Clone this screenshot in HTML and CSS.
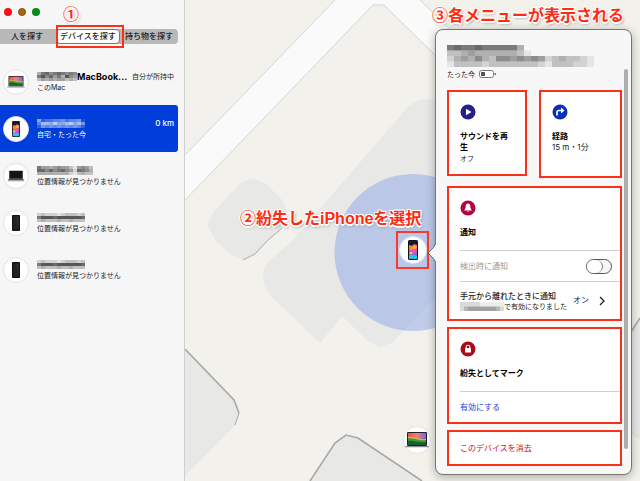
FILE: index.html
```html
<!DOCTYPE html>
<html lang="ja">
<head>
<meta charset="utf-8">
<meta name="viewport" content="width=device-width, initial-scale=1">
<title>探す</title>
<link rel="stylesheet" href="styles.css">
</head>
<body>
<svg class="defs" aria-hidden="true">
  <defs>
    <linearGradient id="screen" x1="0" y1="0" x2="0" y2="1">
      <stop offset="0" stop-color="#5b2346"/><stop offset=".25" stop-color="#f08a3c"/>
      <stop offset=".5" stop-color="#f04c9b"/><stop offset=".7" stop-color="#8a5ae0"/><stop offset="1" stop-color="#26c6e6"/>
    </linearGradient>
    <linearGradient id="sky" x1="0" y1="0" x2="1" y2="0">
      <stop offset="0" stop-color="#f0503c"/><stop offset=".5" stop-color="#f08478"/><stop offset="1" stop-color="#7a62dc"/>
    </linearGradient>
    <symbol id="phone" viewBox="0 0 10 20">
      <rect width="10" height="20" rx="1.5" fill="#15151c"/>
      <rect x="1" y="1" width="8" height="18" rx="1" fill="url(#screen)"/>
      <path d="M1 1h8v4L6 4 4 6 1 5z" fill="#1c1730"/>
      <circle cx="3.6" cy="8" r="2.2" fill="#ff8a2c"/><circle cx="6.8" cy="7.6" r="1.6" fill="#ffb25a"/>
      <circle cx="5.6" cy="12" r="2.4" fill="#ec4fc0"/><circle cx="2.8" cy="13" r="1.3" fill="#ffd24a"/>
      <path d="M1 16l3-1.5L9 16v2.5H1z" fill="#28c5e8"/>
    </symbol>
    <symbol id="phone-off" viewBox="0 0 10 20">
      <rect width="10" height="20" rx="1.2" fill="#101010"/><rect x="1.5" y="1.5" width="7" height="17" fill="#222"/>
      <path d="M5 2h3.5v16z" fill="#303030"/>
    </symbol>
    <symbol id="macbook" viewBox="0 0 24 16">
      <rect x="2" width="20" height="14" rx="1" fill="#20202a"/>
      <rect x="3" y="1" width="18" height="12" fill="url(#sky)"/>
      <path d="M3 5c5-1 10 3 18 2v6H3z" fill="#d8b93c"/>
      <path d="M3 6c6 0 10 3 18 2v5H3z" fill="#3f9a36"/>
      <path d="M3 9c5-1 8 2 18 1v3H3z" fill="#1d5f2c"/>
      <rect y="14" width="24" height="1.2" rx=".6" fill="#8b8d94"/>
    </symbol>
    <symbol id="macbook-off" viewBox="0 0 24 16">
      <rect x="3" y="1" width="18" height="12" rx="1" fill="#151515"/>
      <path d="M3 11h18l2 3H1z" fill="#555"/><path d="M1 14h22v1H1z" fill="#999"/>
    </symbol>
  </defs>
</svg>

<div class="app">
  <aside class="sidebar">
    <header class="titlebar">
      <span class="light light-close"></span><span class="light light-min"></span><span class="light light-zoom"></span>
    </header>
    <nav class="tabs">
      <button type="button">人を探す</button>
      <button type="button" class="active">デバイスを探す</button>
      <button type="button">持ち物を探す</button>
    </nav>
    <div class="note note-one">①</div>
    <ul class="devices">
      <li><button type="button" class="device">
        <span class="avatar"><svg class="mac"><use href="#macbook"/></svg></span>
        <span class="info">
          <span class="name"><svg class="mosaic" data-rows="4786787676,7968574965,3545455343"></svg>MacBook...</span>
          <span class="sub">このMac</span>
        </span>
        <span class="meta">自分が所持中</span>
      </button></li>
      <li><button type="button" class="device selected">
        <span class="avatar"><svg class="tel"><use href="#phone"/></svg></span>
        <span class="info">
          <span class="name"><svg class="mosaic" data-ink="light" data-rows="623344534451,477686678675,254545454542"></svg></span>
          <span class="sub">自宅・たった今</span>
        </span>
        <span class="meta">0 km</span>
      </button></li>
      <li><button type="button" class="device">
        <span class="avatar"><svg class="mac"><use href="#macbook-off"/></svg></span>
        <span class="info">
          <span class="name"><svg class="mosaic" data-rows="75545655315653,88686786528764,44444444213433"></svg></span>
          <span class="sub">位置情報が見つかりません</span>
        </span>
      </button></li>
      <li><button type="button" class="device">
        <span class="avatar"><svg class="tel"><use href="#phone-off"/></svg></span>
        <span class="info">
          <span class="name"><svg class="mosaic" data-rows="232221233323,799989999998,343334334333"></svg></span>
          <span class="sub">位置情報が見つかりません</span>
        </span>
      </button></li>
      <li><button type="button" class="device">
        <span class="avatar"><svg class="tel"><use href="#phone-off"/></svg></span>
        <span class="info">
          <span class="name"><svg class="mosaic" data-rows="232221233323,799989999998,343334334333"></svg></span>
          <span class="sub">位置情報が見つかりません</span>
        </span>
      </button></li>
    </ul>
  </aside>

  <main class="map">
    <svg class="terrain" viewBox="0 0 455 481" preserveAspectRatio="xMinYMin slice" aria-hidden="true">
      <rect width="455" height="481" fill="#f2f1eb"/>
      <path d="M0 155L150 0H235L440 200V245L250 55L199 5H188L0 200z" fill="#fafafa"/>
      <path d="M0 155L150 0M235 0L440 200M440 245L250 55L199 5H188L0 200" fill="none" stroke="#d6d6d2"/>
      <g fill="#e8e8e7">
        <path d="M68 178L80 183L97 200L103 213L97 228L83 240L70 254L58 260L45 254L30 240L22 224L30 210L57 182z"/>
        <path d="M108 240L223 107L232 101L240 99L250 100L320 150V240L250 298L207 343L194 347L182 340L157 316L135 343L85 295Q72 278 83 262z"/>
        <path d="M0 349L49 400L54 413L50 425L0 476z"/>
        <path d="M125 481L150 443L161 435L173 438L237 481z"/>
        <path d="M440 341L455 318V440L440 430z"/>
      </g>
      <path d="M97 228L83 240L70 254L58 260M50 425L54 413" fill="none" stroke="#aaa"/>
      <path d="M0 349L49 400L54 413M125 481L150 443L161 435L173 438L237 481M440 341L455 318" fill="none" stroke="#a8a8a5" stroke-width="1.6"/>
      <circle cx="228" cy="252.500" r="78.500" fill="#bac7e7"/>
      <path d="M207 343L250 298V328Q238 332 223 331z" fill="#fff" opacity=".1"/>
    </svg>

    <button type="button" class="pin pin-phone" aria-label="iPhone"><span class="avatar"><svg class="tel"><use href="#phone"/></svg></span></button>
    <button type="button" class="pin pin-mac" aria-label="MacBook"><span class="avatar"><svg class="mac"><use href="#macbook"/></svg></span></button>
    <div class="note note-two">②紛失したiPhoneを選択</div>
    <div class="note note-three">③各メニューが表示される</div>

    <section class="popover">
      <svg class="arrow" viewBox="0 0 9 20"><path d="M9 0Q8 4 1 10Q8 16 9 20" fill="#f8f8f8" stroke="#666"/></svg>
      <header class="summary">
        <svg class="mosaic large" data-rows="787787777740000000000,334544444431000000000,245464366565652343321,133332333333321333221"></svg>
        <div class="status">たった今
          <svg class="battery" viewBox="0 0 18 8"><rect x=".5" y=".5" width="14" height="7" rx="2" fill="#fff" stroke="#777"/><rect x="2" y="2" width="4" height="4" fill="#555"/><path d="M16 3v2l1-1z" fill="#777" stroke="#777"/></svg>
        </div>
      </header>
      <div class="cards">
        <div class="pair">
          <button type="button" class="card action">
            <svg class="badge" viewBox="0 0 16 16"><circle cx="8" cy="8" r="7.500" fill="#23208a"/><path d="M6 4.700L11.500 8L6 11.300z" fill="#fff"/></svg>
            <strong>サウンドを再生</strong><span class="small">オフ</span>
          </button>
          <button type="button" class="card action">
            <svg class="badge" viewBox="0 0 16 16"><circle cx="8" cy="8" r="7.500" fill="#0930b8"/><path d="M5 11.500V8.500Q5 6.500 7 6.500H10" fill="none" stroke="#fff" stroke-width="1.700"/><path d="M9 3.500L12.500 6.500L9 9.500z" fill="#fff"/></svg>
            <strong>経路</strong><span>15 m・1分</span>
          </button>
        </div>
        <section class="card">
          <svg class="badge" viewBox="0 0 16 16"><circle cx="8" cy="8" r="7.500" fill="#b0063a"/><path d="M8 3.500C6 3.500 5.700 5 5.700 7Q5.500 8.700 4.500 9.700V10.400H11.500V9.700Q10.500 8.700 10.300 7C10.300 5 10 3.500 8 3.500zM7 11.200h2Q8 12.600 7 11.200z" fill="#fff"/></svg>
          <h2>通知</h2>
          <label class="row muted">検出時に通知<input type="checkbox" class="switch" disabled></label>
          <button type="button" class="row leave">
            <span class="leave-text">手元から離れたときに通知
              <span class="small leave-sub"><svg class="mosaic" data-rows="22222111111,24555555542"></svg>で有効になりました</span>
            </span>
            <span>オン</span>
            <svg class="chevron" viewBox="0 0 6 10"><path d="M1 1L5 5L1 9" fill="none" stroke="#222" stroke-width="1.300"/></svg>
          </button>
        </section>
        <section class="card">
          <svg class="badge" viewBox="0 0 16 16"><circle cx="8" cy="8" r="7.500" fill="#a90b18"/><rect x="5" y="7" width="6" height="4.500" rx=".6" fill="#fff"/><path d="M6.200 7V5.800Q6.200 4.200 8 4.200T9.800 5.800V7" fill="none" stroke="#fff" stroke-width="1.100"/></svg>
          <h2>紛失としてマーク</h2>
          <button type="button" class="row link">有効にする</button>
        </section>
        <button type="button" class="card erase">このデバイスを消去</button>
      </div>
      <span class="scrollbar"></span>
    </section>
  </main>
</div>
<script src="mosaic.js"></script>
</body>
</html>
```

FILE: mosaic.js
```js
// Draws redacted names as pixel blocks; each digit is the darkness of one cell.
document.querySelectorAll(".mosaic").forEach(function (svg) {
  var rows = svg.dataset.rows.split(",");
  var ink = svg.dataset.ink === "light" ? "#ffffff" : "#333333";
  svg.setAttribute("viewBox", "0 0 " + rows[0].length + " " + rows.length);
  svg.setAttribute("preserveAspectRatio", "none");
  svg.style.width = rows[0].length * (svg.classList.contains("large") ? 7 : 4) + "px";
  rows.forEach(function (row, y) {
    row.split("").forEach(function (level, x) {
      var cell = document.createElementNS("http://www.w3.org/2000/svg", "rect");
      cell.setAttribute("x", x);
      cell.setAttribute("y", y);
      cell.setAttribute("width", 1);
      cell.setAttribute("height", 1);
      cell.setAttribute("fill", ink);
      cell.setAttribute("opacity", level / 11);
      svg.appendChild(cell);
    });
  });
});
```

FILE: styles.css
```css
* { box-sizing: border-box; }
body {
  margin: 0;
  font: 8px/11px Inter, "Noto Sans CJK JP", sans-serif;
  color: #222;
}
button {
  margin: 0;
  padding: 0;
  border: 0;
  background: none;
  color: inherit;
  font: inherit;
  text-align: left;
}
svg { display: block; flex: none; }
.defs { position: absolute; width: 0; height: 0; }

.app {
  display: grid;
  grid-template-columns: 185px 1fr;
  min-height: 100vh;
}

/* Sidebar */
.sidebar {
  position: relative;
  background: #f6f6f6;
  border-right: 1px solid #cfcfcf;
}
.titlebar { display: flex; gap: 6px; padding: 8px 4px 13px; }
.light { width: 8px; height: 8px; border-radius: 50%; }
.light-close { background: #fb0d1b; }
.light-min { background: #a56a0c; border: 1px solid #7c500c; }
.light-zoom { background: #078a17; }

.tabs {
  display: grid;
  grid-template-columns: 56px 64px 1fr;
  height: 15px;
  margin-right: 6px;
  border-radius: 0 4px 4px 0;
  background: #b9b9b9;
}
.tabs button { text-align: center; white-space: nowrap; font-weight: 500; }
.tabs button:first-child { text-align: right; padding-right: 13px; }
.tabs .active {
  position: relative;
  background: #fff;
  border: 1px solid #777;
  border-radius: 4px;
}
.tabs .active::after {
  content: "";
  position: absolute;
  inset: -5px -5px -5px -1px;
  border: 2px solid #fb3018;
}

.devices { margin: 14px 6px 0 0; padding: 0; list-style: none; }
.device {
  display: flex;
  align-items: center;
  gap: 8px;
  width: 100%;
  height: 47px;
  padding: 0 4px 0 3px;
}
.device.selected { background: #003edb; color: #fff; border-radius: 0 3px 3px 0; }
.avatar {
  display: grid;
  place-items: center;
  flex: none;
  width: 26px;
  height: 26px;
  border-radius: 50%;
  background: #fff;
  border: 1px solid #e2e2e4;
}
.tel { width: 8px; height: 16px; }
.mac { width: 18px; height: 12px; }
.info { flex: 1; min-width: 0; white-space: nowrap; }
.name {
  display: flex;
  align-items: center;
  height: 11px;
  font-size: 9px;
  font-weight: 700;
  color: #000;
}
.mosaic { height: 9px; }
.sub { display: block; font-size: 7px; }
.meta { align-self: flex-start; margin-top: 13px; font-size: 7px; white-space: nowrap; }
.selected .meta { font-size: 8px; font-weight: 500; }

/* Map */
.map { position: relative; overflow: hidden; background: #f2f1eb; }
.terrain { position: absolute; inset: 0; width: 100%; height: 100%; }
.pin { position: absolute; }
.pin .avatar { width: 28px; height: 28px; }
.pin .tel { width: 10px; height: 20px; }
.pin .mac { width: 24px; height: 16px; }
.pin-phone {
  display: grid;
  place-items: center;
  left: 211px;
  top: 231px;
  width: 33px;
  height: 38px;
  border: 2px solid #f93a2a;
}
.pin-mac { left: 218px; top: 426px; }

/* Step captions */
.note {
  position: absolute;
  z-index: 2;
  color: #fd2b12;
  font: 700 16px/20px "Liberation Sans", "Noto Sans CJK JP", sans-serif;
  white-space: nowrap;
  text-shadow: -1px -1px #fff, 1px -1px #fff, -1px 1px #fff, 1px 1px #fff, 0 2px #fff, 1px 2px 3px #888;
}
.note-one { left: 63px; top: 5px; }
.note-two { left: 55px; top: 209px; }
.note-three { left: 247px; top: 6px; }

/* Device details */
.popover {
  position: absolute;
  left: 250px;
  top: 29px;
  width: 197px;
  padding: 15px 10px 8px 11px;
  border: 1px solid #77776f;
  border-radius: 8px;
  background: #f7f7f7;
  box-shadow: 0 2px 10px rgba(0, 0, 0, .3);
}
.arrow { position: absolute; left: -9px; top: 213px; width: 9px; height: 20px; }
.mosaic.large { height: 22px; }
.status { display: flex; align-items: center; gap: 4px; height: 14px; font-size: 7px; }
.battery { width: 18px; height: 8px; }
.cards { display: grid; gap: 6px; margin-top: 9px; }
.pair {
  display: grid;
  grid-template-columns: 80px 83px;
  justify-content: space-between;
  margin-bottom: 2px;
}
.card {
  display: block;
  border: 2px solid #fb3018;
  background: #fff;
  padding: 12px 0 0 11px;
}
.action { display: flex; flex-direction: column; height: 88px; padding-right: 11px; }
.action strong { margin-top: 11px; color: #000; }
.action:first-child { height: 86px; }
.badge { width: 16px; height: 16px; }
.small { font-size: 7px; }
h2 { margin: 0; padding: 10px 0 12px; font-size: 8px; line-height: 12px; color: #000; }
.row {
  display: flex;
  align-items: center;
  width: 100%;
  height: 31px;
  border-top: 1px solid #d0d0d0;
}
.muted { justify-content: space-between; padding-right: 8px; color: #999; }
.switch {
  appearance: none;
  width: 26px;
  height: 15px;
  margin: 0;
  border: 1px solid #555;
  border-radius: 8px;
  background: #f6f6f6;
}
.switch::before {
  content: "";
  display: block;
  width: 15px;
  height: 13px;
  border-right: 1px solid #777;
  border-radius: 7px;
  background: #fff;
}
.leave { height: 38px; gap: 6px; padding-right: 15px; white-space: nowrap; }
.leave-text { flex: 1; min-width: 0; font-weight: 500; }
.leave-sub { display: flex; align-items: center; height: 9px; font-weight: 400; }
.chevron { width: 6px; height: 10px; margin-left: 4px; }
.link { color: #1742dc; }
.erase { height: 36px; padding: 0 0 0 11px; color: #cf1020; }
.scrollbar {
  position: absolute;
  top: 39px;
  right: 3px;
  bottom: 25px;
  width: 4px;
  border-radius: 2px;
  background: #adadad;
}
```
